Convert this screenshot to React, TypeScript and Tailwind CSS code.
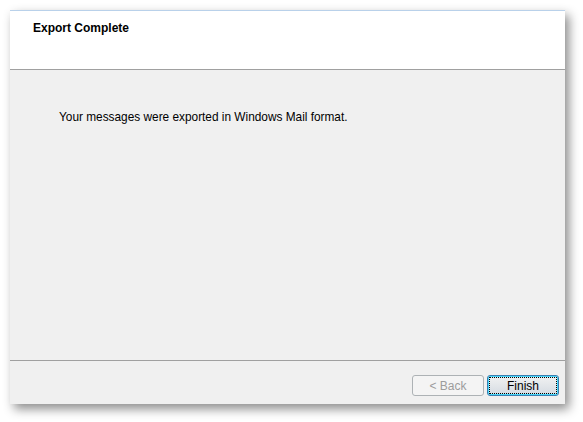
export default function App() {
  return (
    <div className="w-[583px] h-[422px] bg-white pl-[10px] pt-[10px]" style={{ fontFamily: '"Liberation Sans", Arial, sans-serif' }}>
      <div className="w-[555px] h-[394px] flex flex-col border-t border-[#b9d1ea] bg-[#f0f0f0] shadow-[4px_5px_10px_rgba(0,0,0,0.45)]">
        <div className="h-[59px] bg-white border-b border-[#a0a0a0] pl-[23px] pt-[11px]">
          <h1 className="text-[12px] font-bold text-black leading-none">Export Complete</h1>
        </div>
        <div className="flex-1 pl-[49px] pt-[42px]">
          <p className="text-[11.85px] text-black leading-none">Your messages were exported in Windows Mail format.</p>
        </div>
        <div className="h-[44px] border-t border-[#a0a0a0] flex items-start justify-end gap-[3px] pr-[6px] pt-[14px]">
          <button disabled className="w-[72px] h-[21px] rounded-[3px] border border-[#adb2b5] bg-[#f4f4f4] text-[12px] text-[#9c9c9c] leading-none">
            &lt; Back
          </button>
          <button className="w-[72px] h-[21px] rounded-[3px] border border-[#3c7fb1] bg-gradient-to-b from-[#f2f2f2] to-[#d4dbe2] text-[12px] text-black leading-none p-[1px] shadow-[inset_0_0_0_1px_#48d8fb]">
            <span className="flex items-center justify-center w-full h-full border border-dotted border-black rounded-[1px]">Finish</span>
          </button>
        </div>
      </div>
    </div>
  );
}
